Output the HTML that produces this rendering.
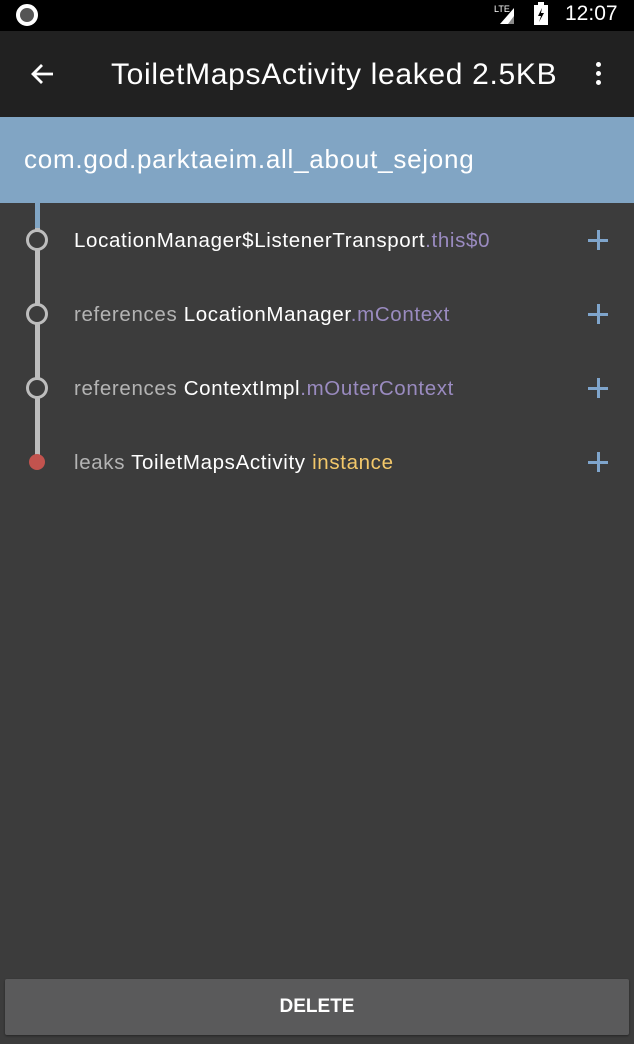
<!DOCTYPE html><html><head><style>
body{margin:0;width:634px;height:1044px;background:#3c3c3c;font-family:"Liberation Sans",sans-serif;position:relative;overflow:hidden}
.a{position:absolute}
.row{position:absolute;left:74px;font-size:20.5px;color:#fff;white-space:nowrap;letter-spacing:0.65px}
.g{color:#b4b4b4}.p{color:#9a8bc0}.y{color:#f3c86a}
.plus{position:absolute;left:588px;width:20px;height:20px}
.plus:before{content:"";position:absolute;left:0;top:9px;width:20px;height:2.5px;background:#7fa5cc}
.plus:after{content:"";position:absolute;left:9px;top:0;width:2.5px;height:20px;background:#7fa5cc}
.c{position:absolute;left:26px;width:16px;height:16px;border:3.5px solid #bdbdbd;border-radius:50%;background:#3c3c3c}
</style></head><body>
<div class="a" style="left:0;top:0;width:634px;height:31px;background:#000"></div>
<div class="a" style="left:16px;top:4px;width:14px;height:14px;border:4px solid #fff;border-radius:50%;background:#555"></div>
<svg class="a" style="left:494px;top:2px" width="30" height="24"><text x="0" y="10" font-size="9" fill="#fff" font-family="Liberation Sans">LTE</text><polygon points="6,22 20,22 20,6" fill="#fff"/><polygon points="14,22 20,22 20,14" fill="#888"/></svg>
<svg class="a" style="left:532px;top:2px" width="18" height="24"><rect x="2" y="3" width="14" height="20" fill="#fff"/><rect x="6" y="0" width="6" height="3" fill="#fff"/><polygon points="10,6 6,14 9,14 7,20 12,11 9,11" fill="#000"/></svg>
<div class="a" style="left:565px;top:2px;font-size:21px;color:#fff">12:07</div>
<div class="a" style="left:0;top:31px;width:634px;height:86px;background:#212121"></div>
<svg class="a" style="left:29px;top:62px" width="26" height="26"><path d="M24 12H4M13 3L4 12L13 21" stroke="#fff" stroke-width="2.8" fill="none"/></svg>
<div class="a" style="left:111px;top:58px;font-size:30px;color:#fff;letter-spacing:0.68px;white-space:nowrap">ToiletMapsActivity leaked 2.5KB</div>
<div class="a" style="left:596px;top:62px;width:5px;height:5px;background:#fff;border-radius:50%;box-shadow:0 9px 0 #fff,0 18px 0 #fff"></div>
<div class="a" style="left:0;top:117px;width:634px;height:86px;background:#81a5c4"></div>
<div class="a" style="left:24px;top:144px;font-size:26px;color:#fff;letter-spacing:0.75px;white-space:nowrap">com.god.parktaeim.all_about_sejong</div>
<div class="a" style="left:0;top:203px;width:27px;height:10px;background:#3c3c3c;border-top-right-radius:8px"></div>
<div class="a" style="left:33px;top:203px;width:601px;height:10px;background:#3c3c3c;border-top-left-radius:8px"></div>
<div class="a" style="left:34.5px;top:203px;width:5px;height:25px;background:#81a5c4"></div>
<div class="a" style="left:34.5px;top:228px;width:5px;height:234px;background:#bdbdbd"></div>
<div class="c" style="top:229px"></div>
<div class="c" style="top:303px"></div>
<div class="c" style="top:377px"></div>
<div class="a" style="left:29px;top:454px;width:16px;height:16px;border-radius:50%;background:#c2534e"></div>
<div class="row" style="top:229px">LocationManager$ListenerTransport<span class="p">.this$0</span></div>
<div class="row" style="top:303px"><span class="g">references </span>LocationManager<span class="p">.mContext</span></div>
<div class="row" style="top:377px"><span class="g">references </span>ContextImpl<span class="p">.mOuterContext</span></div>
<div class="row" style="top:451px"><span class="g">leaks </span>ToiletMapsActivity <span class="y">instance</span></div>
<div class="plus" style="top:230px"></div><div class="plus" style="top:304px"></div><div class="plus" style="top:378px"></div><div class="plus" style="top:452px"></div>
<div class="a" style="left:5px;top:979px;width:624px;height:56px;background:#5a5a5b;border-radius:2px;box-shadow:0 1px 2px rgba(0,0,0,.4)"></div>
<div class="a" style="left:0;top:996px;width:634px;text-align:center;font-size:19px;font-weight:bold;color:#fff">DELETE</div>
</body></html>
